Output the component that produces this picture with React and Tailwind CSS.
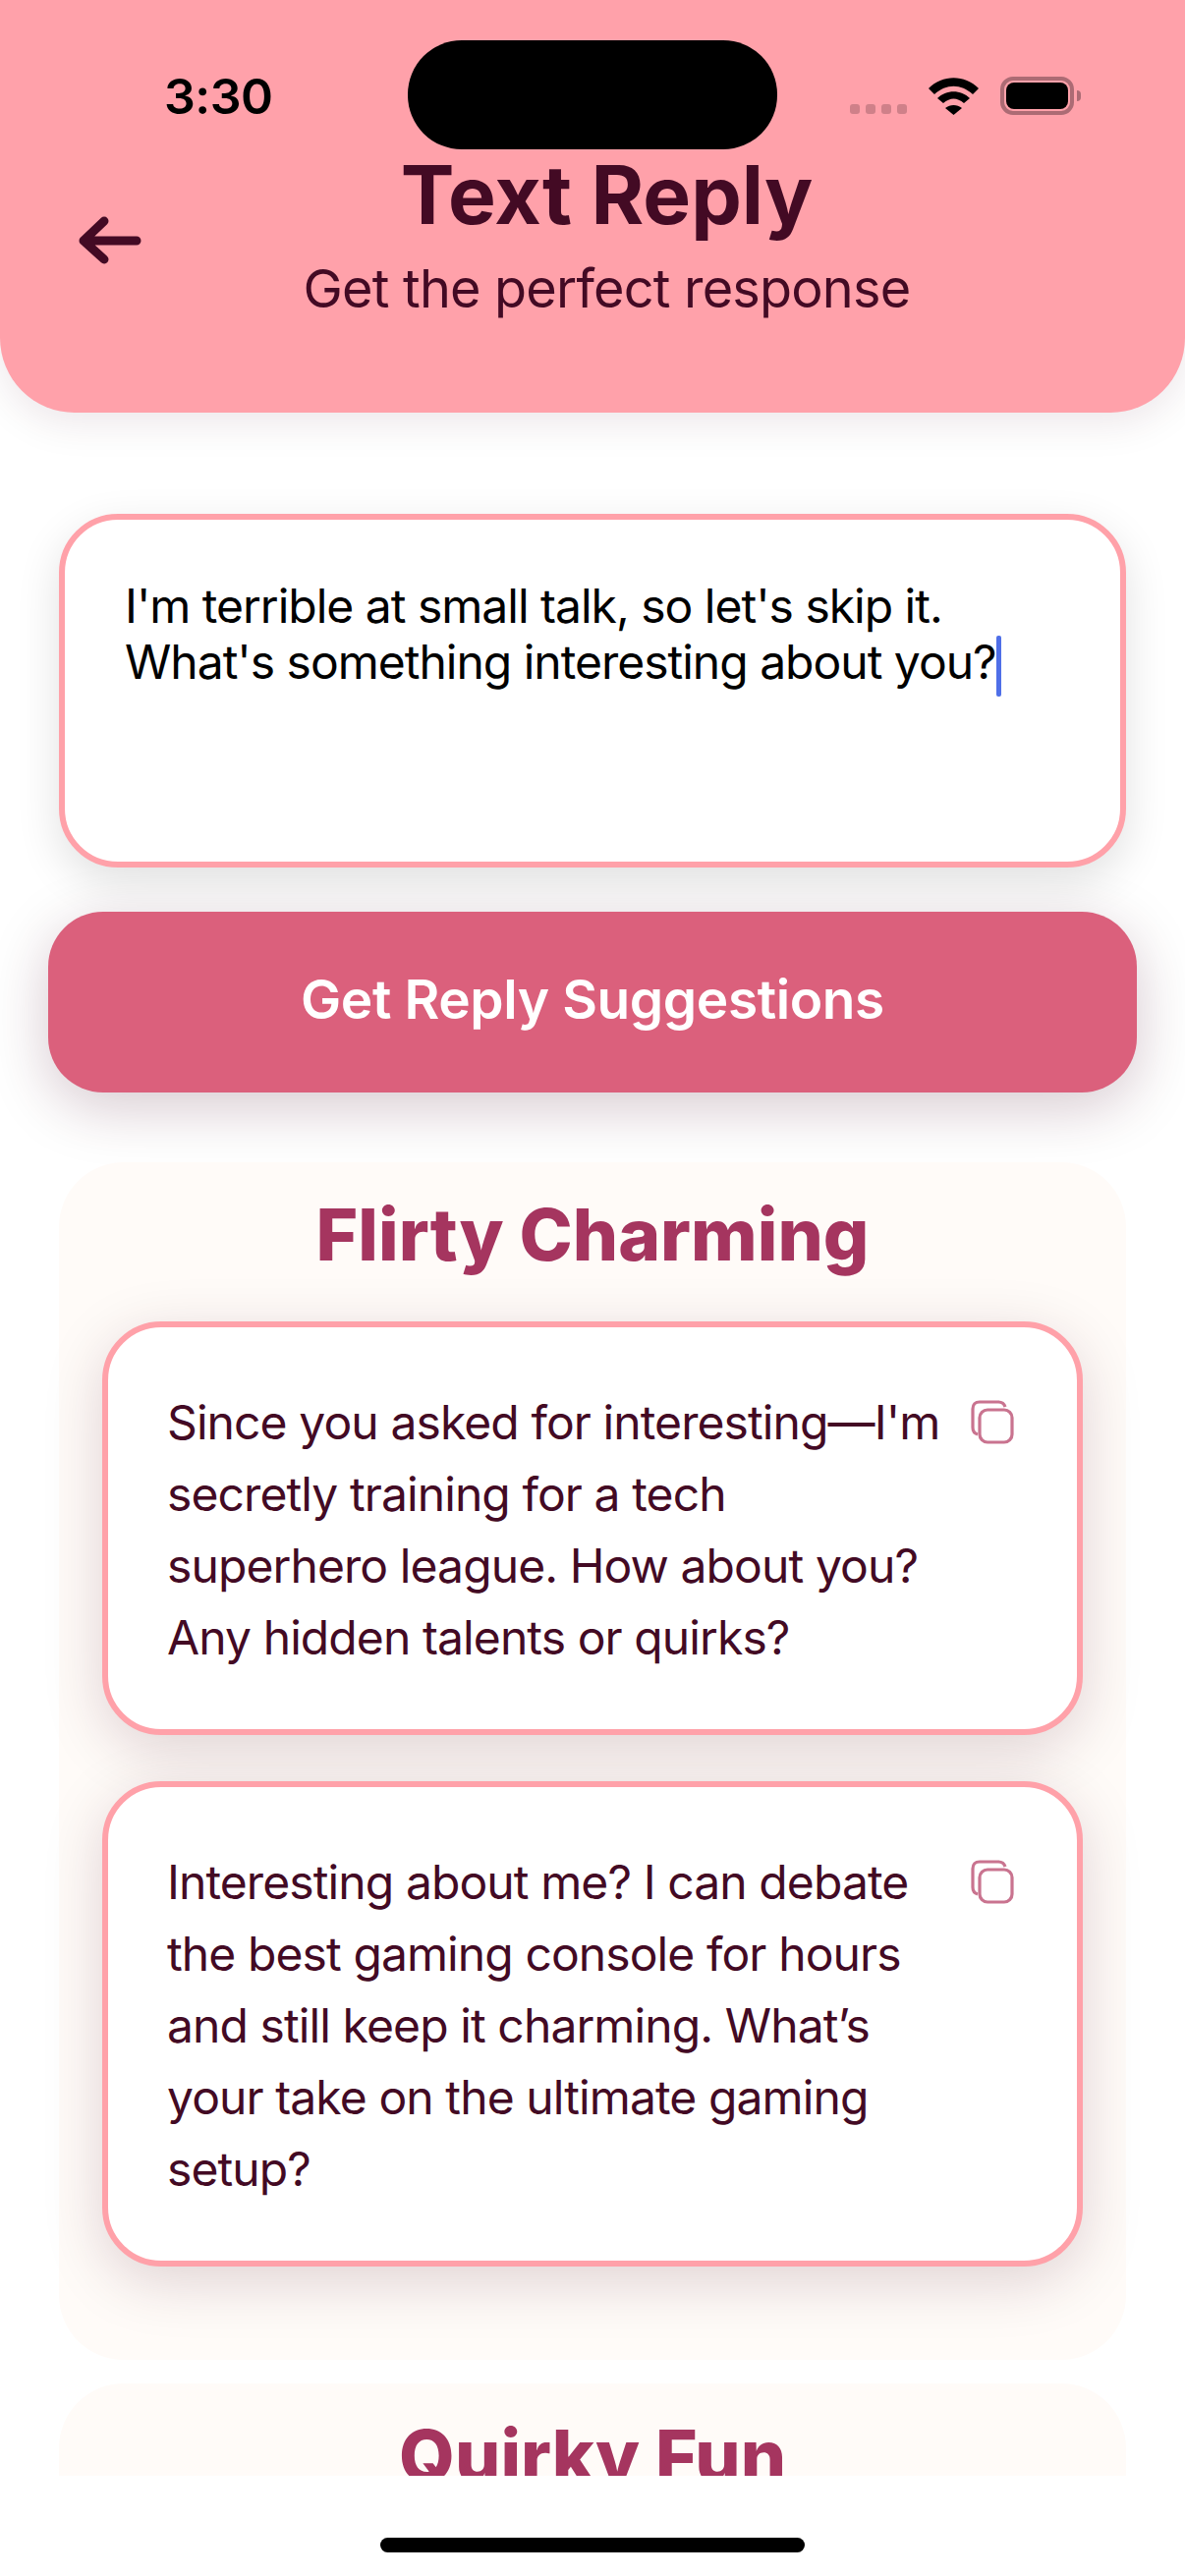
import React from 'react';

const suggestions = [
  "Since you asked for interesting—I'm secretly training for a tech superhero league. How about you? Any hidden talents or quirks?",
  "Interesting about me? I can debate the best gaming console for hours and still keep it charming. What’s your take on the ultimate gaming setup?",
];

const CopyIcon = () => (
  <svg width="44" height="45" viewBox="0 0 44 45" fill="none" stroke="#c9738f" strokeWidth="3.2" className="shrink-0 mt-[14px]">
    <path d="M7 35 C3.5 34 2 32 2 28 V9 C2 4.5 4.5 2 9 2 H28 C31.5 2 34 3.5 35 7" />
    <rect x="9" y="10" width="33" height="33" rx="8" />
  </svg>
);

const SuggestionCard = ({ text }) => (
  <div className="flex justify-between bg-white border-[6px] border-[#ffa1a9] rounded-[60px] pl-[60px] pr-[64px] pt-[60px] pb-[57px] shadow-[0_15px_60px_rgba(67,10,36,0.17)]">
    <p className="w-[795px] text-[48px] leading-[73px] tracking-[-0.9px] text-[#430a24]">{text}</p>
    <CopyIcon />
  </div>
);

export default function App() {
  return (
    <div className="w-[1206px] h-[2622px] flex flex-col overflow-hidden bg-white font-['Inter',sans-serif]">
      {/* Header */}
      <header className="relative z-10 h-[420px] shrink-0 bg-[#ffa1aa] rounded-b-[76px] shadow-[0_10px_40px_rgba(67,10,36,0.1)] flex flex-col items-center pt-[150px] pl-[29px] text-[#430a24]">
        <span className="absolute left-[167px] top-[68px] text-[50px] leading-[60px] font-semibold tracking-[-0.5px] text-black">3:30</span>
        <div className="absolute left-[415px] top-[41px] w-[376px] h-[111px] rounded-[55px] bg-black" />
        <div className="absolute left-[865px] top-[78px] flex items-start">
          <div className="flex gap-[6px] mt-[28px]">
            <span className="w-[10px] h-[10px] rounded-[3px] bg-[#cf8089]" />
            <span className="w-[10px] h-[10px] rounded-[3px] bg-[#cf8089]" />
            <span className="w-[10px] h-[10px] rounded-[3px] bg-[#cf8089]" />
            <span className="w-[10px] h-[10px] rounded-[3px] bg-[#cf8089]" />
          </div>
          <svg width="51" height="38" viewBox="0 0 51 38" className="ml-[22px] mt-[1px]">
            <path d="M0 11 C14 -3.5 37 -3.5 51 11 L45 17 C33 6 18 6 6 17 Z" />
            <path d="M9 21 C18 12 33 12 42 21 L36 26 C29 20 22 20 15 26 Z" />
            <path d="M17 31 C22 27 29 27 34 31 L25.5 38 Z" />
          </svg>
          <div className="ml-[22px] w-[75px] h-[39px] rounded-[13px] border-[4px] border-[#ac6b74] p-[2px]">
            <div className="w-full h-full rounded-[8px] bg-black" />
          </div>
          <span className="ml-[3px] mt-[14px] w-[4px] h-[11px] rounded-r-[4px] bg-[#ac6b74]" />
        </div>
        <svg width="72" height="50" viewBox="0 0 72 50" fill="none" stroke="#430a24" strokeWidth="9" strokeLinecap="round" strokeLinejoin="round" className="absolute left-[76px] top-[220px]">
          <path d="M9 25 H63 M30 5 L9 25 L30 44" />
        </svg>
        <h1 className="text-[82px] leading-[98px] font-bold">Text Reply</h1>
        <p className="text-[54px] leading-[65px] mt-[13px] tracking-[-0.8px]">Get the perfect response</p>
      </header>

      {/* Content */}
      <main className="flex-1 overflow-hidden pt-[103px]">
        <div className="mx-[60px] h-[360px] bg-white border-[6px] border-[#ffa1a9] rounded-[60px] pl-[61px] pt-[59px] text-[48px] leading-[57px] tracking-[-1px] text-black shadow-[0_15px_45px_rgba(0,0,0,0.12)]">
          I'm terrible at small talk, so let's skip it.<br />
          What's something interesting about you?<span className="inline-block w-[5px] h-[62px] -my-[5px] align-middle rounded-[2px] bg-[#4f6fe8]" />
        </div>

        <button className="block mt-[45px] mx-[49px] w-[1108px] h-[184px] pb-[6px] rounded-[56px] bg-[#db607c] text-white text-[55px] tracking-[-0.4px] font-semibold shadow-[0_15px_60px_rgba(67,10,36,0.22)]">
          Get Reply Suggestions
        </button>

        <section className="mt-[71px] mx-[60px] h-[1219px] bg-[#fffbf8] rounded-[66px] px-[44px] pt-[30px]">
          <h2 className="text-center text-[73px] leading-[87px] font-extrabold text-[#a5355f]">Flirty Charming</h2>
          <div className="flex flex-col gap-[47px] mt-[45px]">
            {suggestions.map(s => <SuggestionCard key={s} text={s} />)}
          </div>
        </section>

        <section className="mt-[24px] mx-[60px] h-[400px] bg-[#fffbf8] rounded-[66px] pt-[30px]">
          <h2 className="text-center text-[73px] leading-[87px] font-extrabold text-[#a5355f]">Quirky Fun</h2>
        </section>
      </main>

      {/* Home indicator */}
      <footer className="h-[102px] shrink-0 bg-white flex justify-center pt-[63px]">
        <div className="w-[432px] h-[15px] rounded-full bg-black" />
      </footer>
    </div>
  );
}
